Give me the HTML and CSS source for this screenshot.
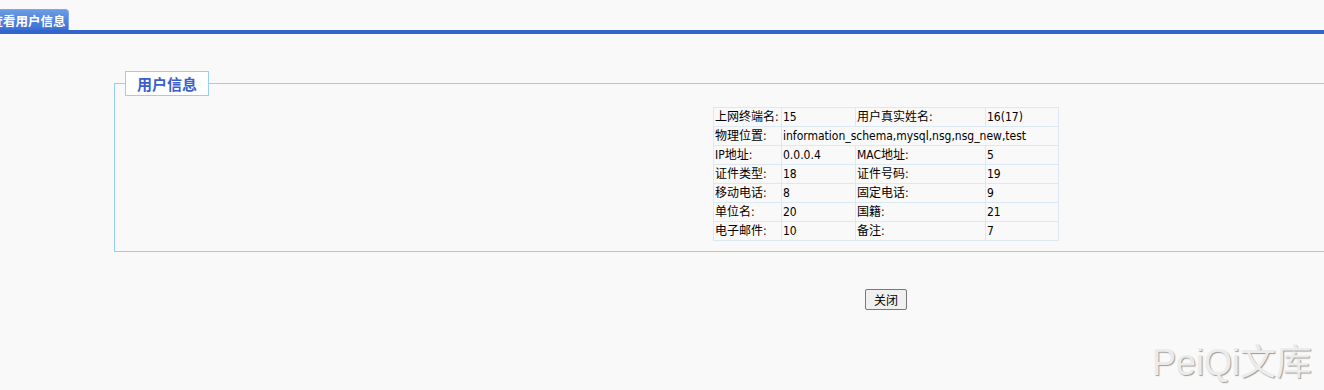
FILE: index.html
```html
<!DOCTYPE html>
<html>
<head>
    <meta charset="UTF-8">
    <title>查看用户信息</title>
    <link rel="stylesheet" href="styles.css">
</head>
<body>
    <div class="tab_bar">
        <span class="tab">查看用户信息</span>
    </div>

    <div class="page">
        <fieldset class="info_box">
            <legend>用户信息</legend>
            <table class="info_table">
                <colgroup>
                    <col class="c1"><col class="c2"><col class="c3"><col class="c4">
                </colgroup>
                <tr>
                    <td>上网终端名:</td><td>15</td>
                    <td>用户真实姓名:</td><td>16(17)</td>
                </tr>
                <tr>
                    <td>物理位置:</td><td colspan="3">information_schema,mysql,nsg,nsg_new,test</td>
                </tr>
                <tr>
                    <td>IP地址:</td><td>0.0.0.4</td>
                    <td>MAC地址:</td><td>5</td>
                </tr>
                <tr>
                    <td>证件类型:</td><td>18</td>
                    <td>证件号码:</td><td>19</td>
                </tr>
                <tr>
                    <td>移动电话:</td><td>8</td>
                    <td>固定电话:</td><td>9</td>
                </tr>
                <tr>
                    <td>单位名:</td><td>20</td>
                    <td>国籍:</td><td>21</td>
                </tr>
                <tr>
                    <td>电子邮件:</td><td>10</td>
                    <td>备注:</td><td>7</td>
                </tr>
            </table>
        </fieldset>

        <div class="btn_row">
            <button class="btn">关闭</button>
        </div>
    </div>

    <div class="mark">PeiQi文库</div>
</body>
</html>
```

FILE: styles.css
```css
html,body{
    margin:0;
    padding:0;
    background:#f9f9f9;
    overflow:hidden;
    height:100%;
}
body{
    font-family:"DejaVu Sans Condensed","Noto Sans CJK SC",sans-serif;
    font-size:12px;
    color:#000;
}
.tab_bar{
    margin-top:9px;
    height:21px;
    border-bottom:4px solid #3366cc;
    position:relative;
}
.tab{
    position:absolute;
    left:-13px;
    top:0;
    width:82px;
    height:21px;
    line-height:21px;
    box-sizing:border-box;
    border:1px solid #7fa6e6;
    border-bottom:none;
    border-radius:0 4px 0 0;
    background:linear-gradient(#6b9be6,#3a6fd3);
    color:#fff;
    font-family:"Noto Sans CJK SC",sans-serif;
    font-weight:bold;
    font-size:12.5px;
    text-align:center;
    white-space:nowrap;
}
.page{
    width:1772px;
}
.info_box{
    margin:37px 114px 0 114px;
    padding:0 0 10px 0;
    border:1px solid #99ccff;
    min-width:0;
}
.info_box legend{
    margin-left:10px;
    padding:0 11px;
    height:25px;
    line-height:23px;
    box-sizing:border-box;
    border:1px solid #99ccff;
    background:#fff;
    color:#3a5fcd;
    font-family:"Noto Sans CJK SC",sans-serif;
    font-weight:bold;
    font-size:15px;
}
.info_table{
    margin:11px auto 0 auto;
    border-collapse:collapse;
    table-layout:fixed;
    width:345px;
}
.info_table .c1{ width:68px; }
.info_table .c2{ width:74px; }
.info_table .c3{ width:130px; }
.info_table .c4{ width:73px; }
.info_table td{
    border:1px solid #dce9f4;
    height:18px;
    padding:0 1px 0 1px;
    white-space:nowrap;
    overflow:hidden;
    line-height:17px;
}
.btn_row{
    text-align:center;
    padding-top:37px;
}
.btn{
    font-family:"Noto Sans CJK SC",sans-serif;
    font-size:12px;
    width:42px;
    height:21px;
    padding:0;
    border:1px solid #777;
    border-radius:2px;
    background:#f0f0f0;
    color:#000;
}
.mark{
    position:absolute;
    left:1152px;
    top:333px;
    font-family:"Liberation Sans","Noto Sans CJK SC",sans-serif;
    font-size:36px;
    color:#ececec;
    text-shadow:1px 1px 1px #9a9a9a;
    white-space:nowrap;
}
```
